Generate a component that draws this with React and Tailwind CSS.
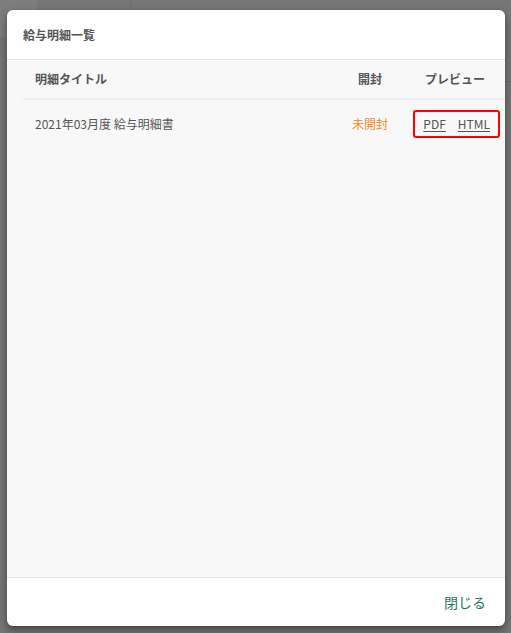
export default function App() {
    const rows = [{ title: '2021年03月度 給与明細書', opened: false }];

    return (
        <div
            className="relative h-[633px] w-[511px] overflow-hidden bg-[#767676] pl-[7px] pt-[10px]"
            style={{ fontFamily: '"Noto Sans CJK JP", "Noto Sans", sans-serif' }}
        >
            {/* faint page behind the overlay */}
            <div className="absolute left-0 top-0 h-[37px] w-[37px] rounded-br-md bg-[#7d7d7d]" />
            <div className="absolute left-[130px] top-0 h-[10px] w-px bg-[#6e6e6e]" />
            <div className="absolute right-0 top-[81px] h-px w-[6px] bg-[#6a6a6a]" />

            {/* Modal */}
            <div className="relative flex h-[616px] w-[498px] flex-col overflow-hidden rounded-md bg-white shadow-[0_4px_8px_rgba(0,0,0,0.45)]">
                <div className="flex h-[50px] shrink-0 items-center border-b border-[#e2e2e2] px-4">
                    <h2 className="text-[12px] font-bold text-[#555]">給与明細一覧</h2>
                </div>

                <div className="flex-1 bg-[#f8f8f8] pl-4">
                    <div className="grid h-[40px] grid-cols-[312px_70px_100px] items-center border-b-2 border-[#ececec] text-[12px] font-bold text-[#555]">
                        <span className="pl-3">明細タイトル</span>
                        <span className="text-center">開封</span>
                        <span className="text-center">プレビュー</span>
                    </div>
                    {rows.map((row) => (
                        <div
                            key={row.title}
                            className="grid h-[48px] grid-cols-[312px_70px_100px] items-center text-[12px] text-[#555]"
                        >
                            <span className="pl-3">{row.title}</span>
                            <span className="text-center text-[#f08a24]">
                                {row.opened ? '開封済' : '未開封'}
                            </span>
                            <div className="flex justify-end pr-[5px]">
                                <div className="flex h-[28px] w-[87px] items-center justify-end gap-3 rounded-[3px] border-2 border-[#ff0000] pr-[8px]">
                                    <a href="#" className="underline underline-offset-2">PDF</a>
                                    <a href="#" className="underline underline-offset-2">HTML</a>
                                </div>
                            </div>
                        </div>
                    ))}
                </div>

                <div className="flex h-[49px] shrink-0 items-center justify-end border-t border-[#e2e2e2] pr-[19px]">
                    <button className="text-[14px] text-[#1f7a62]">閉じる</button>
                </div>
            </div>
        </div>
    );
}
